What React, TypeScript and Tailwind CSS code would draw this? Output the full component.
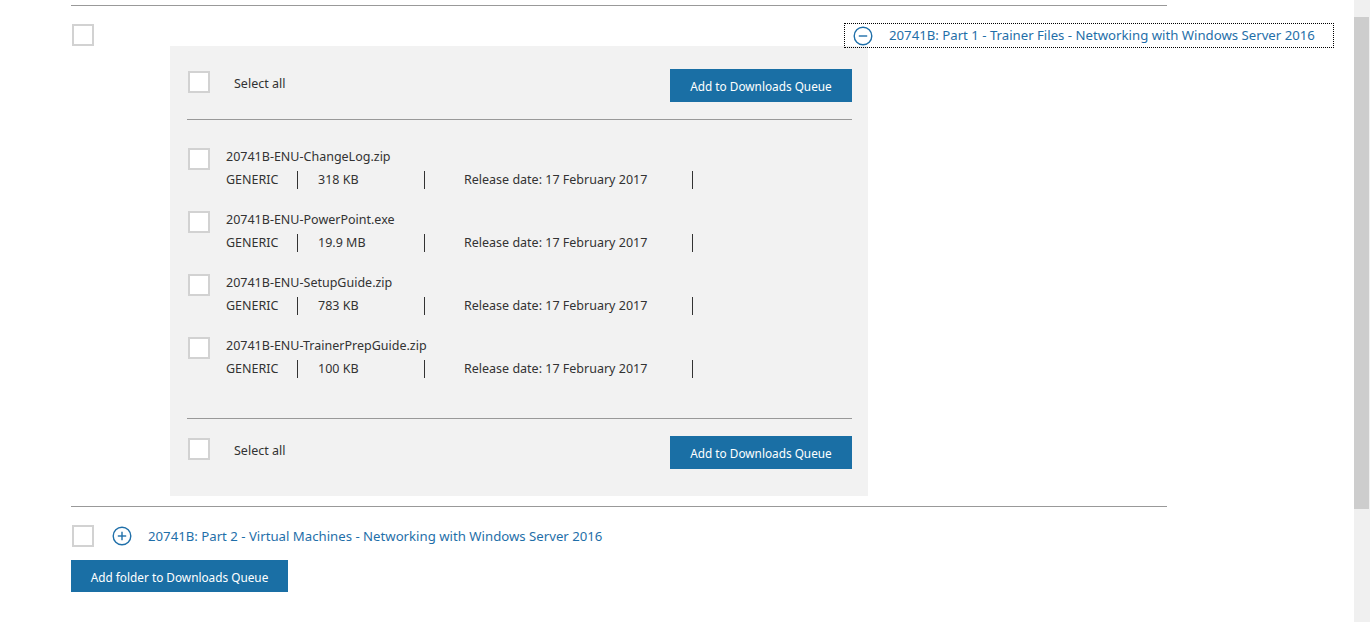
import type { ReactNode } from 'react'

interface FileItem {
  name: string
  kind: string
  size: string
  released: string
}

const files: FileItem[] = [
  { name: '20741B-ENU-ChangeLog.zip', kind: 'GENERIC', size: '318 KB', released: '17 February 2017' },
  { name: '20741B-ENU-PowerPoint.exe', kind: 'GENERIC', size: '19.9 MB', released: '17 February 2017' },
  { name: '20741B-ENU-SetupGuide.zip', kind: 'GENERIC', size: '783 KB', released: '17 February 2017' },
  { name: '20741B-ENU-TrainerPrepGuide.zip', kind: 'GENERIC', size: '100 KB', released: '17 February 2017' },
]

const fontCls = "font-['Noto_Sans',sans-serif]"
const linkCls = 'text-[#1f6fa9]'
const btnCls = 'bg-[#1a6fa5] pt-[3px] text-[11.8px] text-white hover:bg-[#155d8a]'

function Box({ className = '' }: { className?: string }) {
  return <span className={`block h-[22px] w-[22px] shrink-0 border-2 border-[#d2d2d2] bg-white ${className}`} />
}

function CircleIcon({ plus }: { plus?: boolean }) {
  return (
    <svg width="20" height="20" viewBox="0 0 20 20" fill="none" stroke="#1f6fa9" strokeWidth="1.4" className="shrink-0">
      <circle cx="10" cy="10" r="8.8" />
      <path d="M5.8 10h8.4" />
      {plus && <path d="M10 5.8v8.4" />}
    </svg>
  )
}

function Cell({ className, children }: { className: string; children: ReactNode }) {
  return <div className={`h-[18px] border-r border-[#333] leading-[18px] ${className}`}>{children}</div>
}

function SelectAllBar() {
  return (
    <div className="flex items-start justify-between">
      <label className="ml-px mt-px flex items-center gap-6">
        <Box />
        <span className="pt-[5px]">Select all</span>
      </label>
      <button className={`h-[33px] w-[182px] ${btnCls}`}>Add to Downloads Queue</button>
    </div>
  )
}

export default function App() {
  return (
    <div className={`flex min-h-[622px] bg-white text-[12.5px] text-[#333] ${fontCls}`}>
      <main className="flex-1 pl-[71px] pt-[5px]">
        <div className="w-[1263px]">
          <div className="w-[1096px] border-t border-[#999]" />

          <div className="flex h-[40px] items-start">
            <Box className="ml-px mt-[18px]" />
            <button className={`ml-auto mt-[17px] flex h-[25px] w-[490px] items-center gap-4 whitespace-nowrap border border-dotted border-black pl-2 text-left text-[13.2px] ${linkCls}`}>
              <CircleIcon />
              <span className="pt-px">20741B: Part 1 - Trainer Files - Networking with Windows Server 2016</span>
            </button>
          </div>

          <section className="ml-[99px] h-[450px] w-[698px] bg-[#f2f2f2] pl-[17px] pr-[16px] pt-[23px]">
            <SelectAllBar />
            <div className="mt-[17px] border-t border-[#999]" />

            <div className="flex flex-col gap-[21px] pt-[27px]">
              {files.map((file) => (
                <div key={file.name} className="flex items-start">
                  <Box className="ml-px mt-px" />
                  <div className="ml-4 pt-px">
                    <p className="h-[18px] leading-[18px]">{file.name}</p>
                    <div className="mt-[5px] flex">
                      <Cell className="w-[72px]">{file.kind}</Cell>
                      <Cell className="w-[127px] pl-5">{file.size}</Cell>
                      <Cell className="w-[268px] pl-[39px]">Release date: {file.released}</Cell>
                    </div>
                  </div>
                </div>
              ))}
            </div>

            <div className="mb-[17px] mt-[40px] border-t border-[#999]" />
            <SelectAllBar />
          </section>

          <div className="mt-[10px] w-[1096px] border-t border-[#999]" />

          <div className="mt-[18px] flex items-center">
            <Box className="ml-px" />
            <span className="ml-[18px]">
              <CircleIcon plus />
            </span>
            <a href="#" className={`ml-4 whitespace-nowrap pt-px text-[13.2px] ${linkCls}`}>
              20741B: Part 2 - Virtual Machines - Networking with Windows Server 2016
            </a>
          </div>

          <button className={`mt-[13px] h-[32px] w-[217px] ${btnCls}`}>Add folder to Downloads Queue</button>
        </div>
      </main>

      <aside className="w-[16px] shrink-0 bg-[#f0f0f0]">
        <div className="mt-[17px] h-[492px] w-[15px] bg-[#cdcdcd]" />
      </aside>
    </div>
  )
}
